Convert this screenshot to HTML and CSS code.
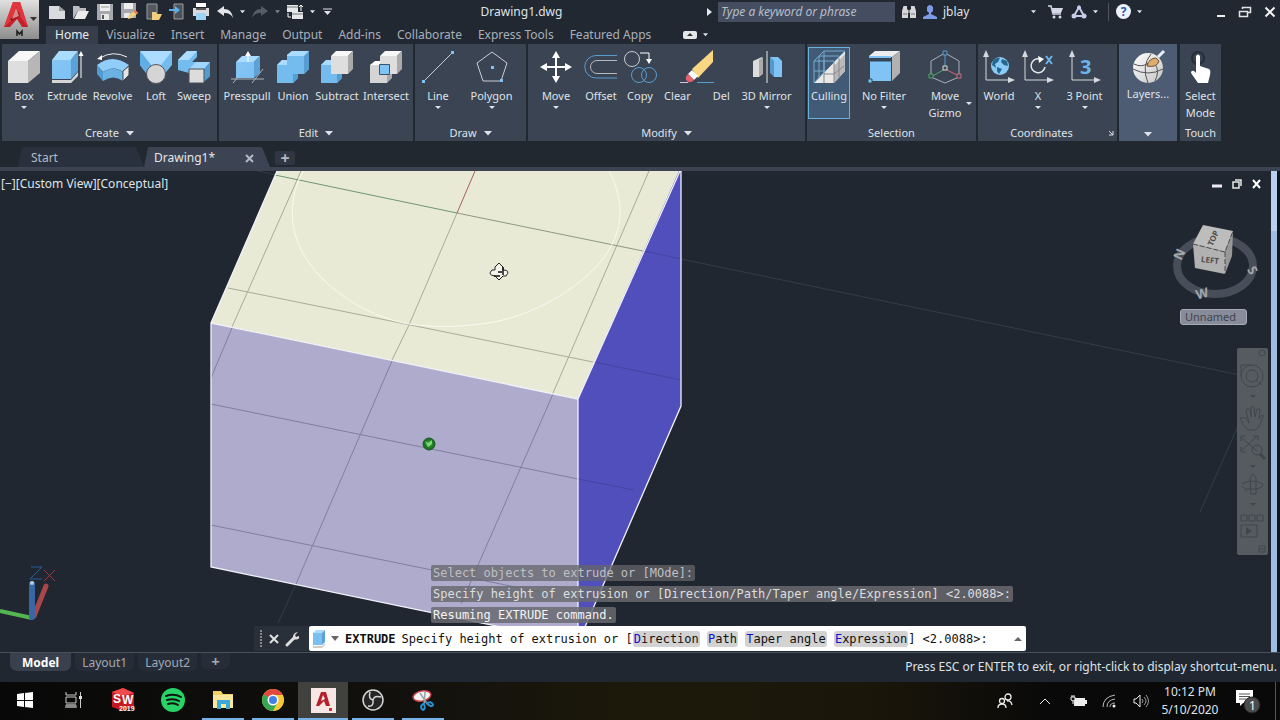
FILE: index.html
```html
<!DOCTYPE html>
<html lang="en">
<head>
<meta charset="utf-8">
<title>Drawing1.dwg</title>
<link rel="stylesheet" href="styles.css">
</head>
<body>
<svg class="defs" aria-hidden="true">
  <defs>
    <linearGradient id="gBlue" x1="0" y1="0" x2="1" y2="1"><stop offset="0" stop-color="#86c6f5"/><stop offset="1" stop-color="#7cc0f2"/></linearGradient>
    <linearGradient id="gApp" x1="0" y1="0" x2="0" y2="1"><stop offset="0" stop-color="#e0e0e0"/><stop offset="1" stop-color="#8d8d8d"/></linearGradient>
    <linearGradient id="gBall" x1="0" y1="0" x2="1" y2="1"><stop offset="0" stop-color="#ffffff"/><stop offset="1" stop-color="#c4c4c4"/></linearGradient>
    <radialGradient id="gGreen"><stop offset="0" stop-color="#3fae3a"/><stop offset="1" stop-color="#12641a"/></radialGradient>
    <symbol id="down" viewBox="0 0 6 4"><path d="M0 0h6L3 3.500z" fill="#dfe3e9"/></symbol>
    <symbol id="downBig" viewBox="0 0 8 5"><path d="M0 0h8L4 4.500z" fill="#dfe3e9"/></symbol>
    <symbol id="axes" viewBox="0 0 34 34"><path d="M4 4v26h27" fill="none" stroke="#d5d9df"/><path d="M4 0l3 7H1zM33 30l-7-3v6z" fill="#d5d9df"/></symbol>
  </defs>
</svg>
<div class="app">
  <header class="header">
    <button class="app-button" aria-label="Application menu">
      <svg width="39" height="39" viewBox="0 0 39 39"><rect width="39" height="39" fill="url(#gApp)"/><path d="M4 27L13 2h7l8 25h-6l-5-8-7 8z" fill="#c5202b"/><path d="M13 2h7l8 25-9-12-3-8-5 14-7 6z" fill="#e0373e"/><path d="M10 19l9-7 1 4-8 5z" fill="#9c1119"/><path d="M16 8l3 8-7 3z" fill="#d88a8a"/><path d="M17 36v-5l2.500 3 2.500-3v5" fill="none" stroke="#1c1c1c" stroke-width="1.500"/><path d="M30 17h7l-3.500 4z" fill="#333"/></svg>
    </button>
    <div class="titlebar">
      <div class="quick">
        <button aria-label="New"><svg width="18" height="16" viewBox="0 0 18 16"><path d="M1 2h10l6 5v8H1z" fill="#d9dbde"/><path d="M11 2v5h6" fill="#9a9da2"/></svg></button>
        <button aria-label="Open"><svg width="18" height="16" viewBox="0 0 18 16"><path d="M1 15V2h6l1 2h6v3H6z" fill="#b9bbbe"/><path d="M2 15L6 7h11l-4 8z" fill="#ececec"/></svg></button>
        <button aria-label="Save"><svg width="18" height="16" viewBox="0 0 18 16"><path d="M1 0h16v16H1z" fill="#a5a8ac"/><path d="M4 0h10v7H4z" fill="#eee"/><path d="M5 10h8v6H5z" fill="#e8e8e8"/><path d="M6 11h2v4H6z" fill="#555"/><path d="M5 3h8" stroke="#999"/></svg></button>
        <button aria-label="Save as"><svg width="18" height="17" viewBox="0 0 18 17"><path d="M1 0h15v15H1z" fill="#a5a8ac"/><path d="M4 0h9v6H4z" fill="#eee"/><path d="M4 10h6v5H4z" fill="#e8e8e8"/><path d="M8 16l1-4 6-5 3 3-6 5z" fill="#f1cf7b"/><path d="M15 7l3 3-2 1-3-3z" fill="#e8735f"/></svg></button>
        <button aria-label="Open from mobile"><svg width="18" height="16" viewBox="0 0 18 16"><path d="M3 0h10v15H3z" fill="#55595f" stroke="#9b9ea3"/><path d="M8 16V8h4l1 2h5l-3 6z" fill="#f4ce7d"/></svg></button>
        <button aria-label="Save to mobile"><svg width="18" height="16" viewBox="0 0 18 16"><path d="M6 0h9v15H6z" fill="#4d525a" stroke="#9b9ea3"/><path d="M1 5h6V2l5 4-5 4V7H1z" fill="#58b0ee"/></svg></button>
        <button aria-label="Plot"><svg width="18" height="17" viewBox="0 0 18 17"><path d="M4 0h10v4H4z" fill="#fff"/><path d="M1 5h16v8H1z" fill="#d8dadd"/><path d="M4 5h10v2H4z" fill="#555"/><path d="M4 10h10v7H4z" fill="#9cd3f7"/></svg></button>
        <button aria-label="Undo"><svg width="18" height="16" viewBox="0 0 18 16"><path d="M1 7l7-5v3c5 0 8 3 9 9-2-4-5-5-9-5v3z" fill="#e3e5e8"/></svg></button>
        <button aria-label="Undo list"><svg width="5" height="4"><use href="#down"/></svg></button>
        <button aria-label="Redo"><svg width="18" height="16" viewBox="0 0 18 16"><path d="M17 7l-7-5v3c-5 0-8 3-9 9 2-4 5-5 9-5v3z" fill="#555c66"/></svg></button>
        <button class="dim" aria-label="Redo list"><svg width="5" height="4"><use href="#down"/></svg></button>
        <button aria-label="Batch plot"><svg width="18" height="16" viewBox="0 0 18 16"><path d="M1 1h11v7H1zM6 8h11v7H6z" fill="#e6e8ea"/><path d="M1 3h11M6 10h11" stroke="#777"/><path d="M15 1v6m-2-4l2-2 2 2M2 9v4h3" stroke="#fff" fill="none"/></svg></button>
        <button aria-label="Batch list"><svg width="5" height="4"><use href="#down"/></svg></button>
        <button class="customize" aria-label="Customize"><svg width="9" height="8" viewBox="0 0 9 8"><path d="M0 1h9" stroke="#dfe3e9"/><path d="M1 3h7L4.500 7z" fill="#dfe3e9"/></svg></button>
      </div>
      <div class="doc-title">Drawing1.dwg</div>
      <div class="info">
        <svg width="5" height="8"><path d="M0 0l5 4-5 4z" fill="#e6e8ea"/></svg>
        <input class="search" type="text" aria-label="Search" placeholder="Type a keyword or phrase">
        <button aria-label="Find"><svg width="16" height="16" viewBox="0 0 16 16"><path d="M2.500 2h3.500v3l1 1v8H1V7zM10 2h3.500l1.500 5v7H9V6l1-1z" fill="#d8d8da"/><path d="M7 6h2v3H7z" fill="#888"/><path d="M2 10h4M10 10h4" stroke="#777"/></svg></button>
        <button class="user"><svg width="14" height="16" viewBox="0 0 14 16"><path d="M4 3q3-4 6 0v4L8 9v1l6 3v2H0v-2l6-3V9L4 7z" fill="#7d9be6"/></svg>jblay</button>
        <svg width="5" height="4"><use href="#down"/></svg>
        <button class="store" aria-label="Store"><svg width="15" height="14" viewBox="0 0 15 14"><path d="M0 1h3l2 8h8" fill="none" stroke="#d5d8ea" stroke-width="1.500"/><path d="M4 3h11l-2 5H5z" fill="#d5d8ea"/><circle cx="6" cy="12" r="1.500" fill="#d5d8ea"/><circle cx="12" cy="12" r="1.500" fill="#d5d8ea"/></svg></button>
        <button aria-label="App services"><svg width="16" height="14" viewBox="0 0 16 14"><path d="M8 2l5 9H3z" fill="none" stroke="#c9cde8" stroke-width="2"/><circle cx="8" cy="2.500" r="2" fill="#c9cde8"/><circle cx="3" cy="11" r="2.500" fill="#c9cde8"/><circle cx="13" cy="11" r="2.500" fill="#c9cde8"/></svg></button>
        <svg width="5" height="4"><use href="#down"/></svg>
        <span class="sep"></span>
        <button class="help" aria-label="Help">?</button>
        <svg width="5" height="4"><use href="#down"/></svg>
        <span class="window">
          <button aria-label="Minimize"><svg width="10" height="12"><path d="M1 10h8" stroke="#eee" stroke-width="2"/></svg></button>
          <button aria-label="Restore"><svg width="14" height="12" viewBox="0 0 14 12"><path d="M4.500 3V1.500h8v5H10M1.500 5.500h8v5h-8z" fill="none" stroke="#e4e4e4" stroke-width="1.500"/></svg></button>
          <button aria-label="Close"><svg width="12" height="12" viewBox="0 0 12 12"><path d="M1.500 1.500l9 9M10.500 1.500l-9 9" stroke="#f2f2f2" stroke-width="2"/></svg></button>
        </span>
      </div>
    </div>
    <nav class="menu">
      <button class="active">Home</button><button>Visualize</button><button>Insert</button><button>Manage</button><button>Output</button><button>Add-ins</button><button>Collaborate</button><button>Express Tools</button><button>Featured Apps</button>
      <button class="toggle" aria-label="Minimize ribbon"><svg width="14" height="8" viewBox="0 0 14 8"><rect width="14" height="8" rx="2" fill="#e4e6ea"/><path d="M4 5l3-3 3 3z" fill="#333"/></svg><svg width="5" height="4"><use href="#down"/></svg></button>
    </nav>
  </header>

  <section class="ribbon">
    <div class="panel create">
      <div class="tools">
        <button class="tool"><svg viewBox="0 0 34 34"><path d="M1 11h20v22H1z" fill="#dedede"/><path d="M1 11L12 1h21L21 11z" fill="#f7f7f7"/><path d="M21 11L33 1v22L21 33z" fill="#b9b7b5"/></svg>Box<i></i></button>
        <button class="tool"><svg viewBox="0 0 34 34"><path d="M2 10h19v19H2z" fill="url(#gBlue)"/><path d="M2 10L9 1h19l-7 9z" fill="#a9dcff"/><path d="M21 10l7-9v20l-7 8z" fill="#5da2d6"/><path d="M2 30h19l7-8v4l-7 7H2z" fill="#d6d6d6"/><path d="M31 28V5" stroke="#fff"/><path d="M31 1l2.500 5h-5z" fill="#fff"/></svg>Extrude</button>
        <button class="tool"><svg viewBox="0 0 34 34"><path d="M4 8Q17 0 31 7" fill="none" stroke="#eee"/><path d="M1 9l5-4v5z" fill="#fff"/><path d="M1 15q15-12 32 0l-6 7q-9-7-20 0z" fill="#90cdf8"/><path d="M1 15l6 7v9l-6-7z" fill="#529bd0"/><path d="M7 22q10-7 20 0v9q-10-7-20 0z" fill="#6bb2e4"/><path d="M27 21l6-5v9l-6 6z" fill="#e4e4e4" stroke="#444"/></svg>Revolve</button>
        <button class="tool"><svg viewBox="0 0 34 34"><path d="M1 1h32v14L23 27H10L1 15z" fill="#75bcee"/><path d="M1 1h32L22 15H12z" fill="#acdcff"/><path d="M1 1l11 14-4 9-7-9z" fill="#5faee6"/><circle cx="17" cy="24" r="9.500" fill="#d5d5d5" stroke="#555"/></svg>Loft</button>
        <button class="tool"><svg viewBox="0 0 34 34"><path d="M1 10L10 1h10v6l-5 5h18v14l-6 5V19H12v4l-11-3z" fill="#75bcee"/><path d="M1 10L10 1h10l-8 9z" fill="#acdcff"/><path d="M12 19l7-7h14l-6 7z" fill="#a1d7ff"/><path d="M27 19l6-7v14l-6 6z" fill="#549bcf"/><path d="M12 19h15v14H12z" fill="#dcdcdc" stroke="#4d5057"/></svg>Sweep</button>
      </div>
      <button class="panel-title">Create<svg width="8" height="5"><use href="#downBig"/></svg></button>
    </div>
    <div class="panel edit">
      <div class="tools">
        <button class="tool"><svg viewBox="0 0 34 34"><path d="M1 29h33M3 33l5-6M22 33l11-14" stroke="#aeb3ba"/><path d="M6 12h18v16H6z" fill="url(#gBlue)"/><path d="M6 12l6-6h18l-6 6z" fill="#a9dcff"/><path d="M24 12l6-6v17l-6 5z" fill="#5da2d6"/><path d="M18 12V4" stroke="#fff"/><path d="M18 1l3 5h-6z" fill="#fff"/></svg>Presspull</button>
        <button class="tool"><svg viewBox="0 0 34 34"><path d="M1 15l5-5h5V5l5-4h17v18l-5 5h-6v4l-5 5H1z" fill="#75bcee"/><path d="M11 5l5-4h17l-5 5H11zM1 15l5-5h5v5z" fill="#a9dcff"/><path d="M28 6l5-5v18l-5 5zM17 24h5v4l-5 5z" fill="#569dd1"/></svg>Union</button>
        <button class="tool"><svg viewBox="0 0 34 34"><path d="M1 15l5-5h6v14h10v4l-5 5H1z" fill="#75bcee"/><path d="M1 15l5-5h5v5z" fill="#a9dcff"/><path d="M17 24h5v4l-5 5z" fill="#569dd1"/><path d="M11 6h17v18H11z" fill="#dedede"/><path d="M11 6l5-5h17l-5 5z" fill="#f7f7f7"/><path d="M28 6l5-5v18l-5 5z" fill="#aaa"/></svg>Subtract</button>
        <button class="tool"><svg viewBox="0 0 34 34"><path d="M1 15h17v18H1z" fill="#d5d5d5"/><path d="M1 15l5-4h17l-5 4z" fill="#fff"/><path d="M18 24h5v4l-5 5z" fill="#aaa"/><path d="M11 6h17v18H11z" fill="#dedede"/><path d="M11 6l5-5h17l-5 5z" fill="#f7f7f7"/><path d="M28 6l5-5v18l-5 5z" fill="#aaa"/><path d="M10.500 14.500h10v10h-10z" fill="#7fc4f5" stroke="#3e5365"/></svg>Intersect</button>
      </div>
      <button class="panel-title">Edit<svg width="8" height="5"><use href="#downBig"/></svg></button>
    </div>
    <div class="panel draw">
      <div class="tools">
        <button class="tool"><svg viewBox="0 0 34 34"><path d="M3 31L31 3" stroke="#c9cdd3"/><path d="M1 30h3v3H1zM30 1h3v3h-3z" fill="#7fc4f5"/></svg>Line<i></i></button>
        <button class="tool"><svg viewBox="0 0 34 34"><path d="M17 2l15 11-6 18H8L2 13z" fill="none" stroke="#c9cdd3"/><path d="M16 16h3v3h-3zM25 29h3v3h-3z" fill="#7fc4f5"/></svg>Polygon<i></i></button>
      </div>
      <button class="panel-title">Draw<svg width="8" height="5"><use href="#downBig"/></svg></button>
    </div>
    <div class="panel modify">
      <div class="tools">
        <button class="tool"><svg viewBox="0 0 34 34"><path d="M17 6v22M6 17h22" stroke="#fff" stroke-width="2"/><path d="M17 1l4 7h-8zM17 33l4-7h-8zM1 17l7-4v8zM33 17l-7-4v8z" fill="#fff"/></svg>Move<i></i></button>
        <button class="tool"><svg viewBox="0 0 34 34"><path d="M33 5.500H12a11 11 0 0 0 0 22.500h21" fill="none" stroke="#5a9cd0"/><path d="M33 10.500H13a6 6 0 0 0 0 13h20" fill="none" stroke="#b4b9c1"/></svg>Offset</button>
        <button class="tool"><svg viewBox="0 0 34 34"><circle cx="9" cy="9" r="7.500" fill="none" stroke="#c9cdd3"/><path d="M17 3h9v6" fill="none" stroke="#fff"/><path d="M26 14l-3-5h6z" fill="#fff"/><circle cx="16" cy="25" r="7.500" fill="none" stroke="#5a9cd0"/><circle cx="26" cy="25" r="7.500" fill="none" stroke="#5a9cd0"/></svg>Copy</button>
        <button class="tool erase"><svg viewBox="0 0 34 34"><path d="M0 32.500h8" stroke="#c9cdd3"/><path d="M17 32.500h17" stroke="#5a9cd0"/><path d="M12 19L33 0v12L18 28z" fill="#f9d681"/><path d="M12 20l6 6-4 4-6-6z" fill="#fff"/><path d="M8 24l6 6q-4 4-7 1-3-3 1-7z" fill="#e9606d"/></svg><span><b>Clear</b><b>Del</b></span></button>
        <button class="tool"><svg viewBox="0 0 34 34"><path d="M3 11l9-4v16l-3 4H3z" fill="#dcdcdc"/><path d="M9 10l4-3v17l-4 3z" fill="#aaa"/><path d="M17 1v32" stroke="#e8e8e8"/><path d="M20 7l4 3v17l-4-4z" fill="#5598cc"/><path d="M20 7h8l4 4v16h-8V11z" fill="#7fc4f5"/></svg>3D Mirror<i></i></button>
      </div>
      <button class="panel-title">Modify<svg width="8" height="5"><use href="#downBig"/></svg></button>
    </div>
    <div class="panel selection">
      <div class="tools">
        <button class="tool pressed"><svg viewBox="0 0 34 34"><path d="M2 33L33 1v20L22 33z" fill="#e8e8e8"/><path d="M22 16L33 4v17L22 33z" fill="#b9b9b9"/><path d="M2 33V11L12 1h21L22 12M2 11h20M12 1v21L2 33M12 22h1M7 6h20M7 6v22M2 21h12M12 11v11M22 11v2" fill="none" stroke="#78abd0"/><path d="M22 13v20M12 23v10M12 24h10l10-8M27 8v19" fill="none" stroke="#898989"/></svg>Culling</button>
        <button class="tool"><svg viewBox="0 0 34 34"><path d="M3 10h21v21H3z" fill="#7fc4f5"/><path d="M2 6L8 1h25l-8 6z" fill="#ededed"/><path d="M25 7l8-6v22l-8 8z" fill="#b3b1af"/><path d="M2 7h22" stroke="#7fc4f5" stroke-width="2"/><path d="M3 10.500h21" stroke="#31465b" stroke-width="2"/><path d="M1 29h4v4H1z" fill="#7fc4f5" stroke="#31465b"/></svg>No Filter<i></i></button>
        <button class="tool gizmo"><svg viewBox="0 0 34 34"><path d="M17 3l14 8v16l-14 6-14-6V11z" fill="none" stroke="#a9afb8"/><path d="M17 5v13" stroke="#5a9cd0"/><path d="M17 19l14 7" stroke="#d4687a"/><path d="M17 19L3 27" stroke="#4ea86b"/><path d="M15 1h4v4h-4z" fill="#3b4453" stroke="#5a9cd0"/><path d="M15 16h4v4h-4z" fill="#3b4453" stroke="#ddd"/><path d="M1 24h4v4H1z" fill="#3b4453" stroke="#4ea86b"/><path d="M29 24h4v4h-4z" fill="#3b4453" stroke="#d4687a"/></svg>Move<br>Gizmo<i></i></button>
      </div>
      <div class="panel-title">Selection</div>
    </div>
    <div class="panel coordinates">
      <div class="tools">
        <button class="tool"><svg viewBox="0 0 34 34"><use href="#axes"/><circle cx="18" cy="16" r="9" fill="#8bcbf6"/><path d="M11 10q5-3 7-2l-2 4-3 2 1 4-4-3zM20 9l5 2 1 5-4-1-3-3zM15 17l5 2-3 5-2-3z" fill="#24678f"/></svg>World</button>
        <button class="tool"><svg viewBox="0 0 34 34"><use href="#axes"/><path d="M19 9a7 7 0 1 0 5 8" fill="none" stroke="#e4e6ea" stroke-width="1.500"/><path d="M17 6l6 3-5 4z" fill="#fff"/><path d="M25 6l6 8M31 6l-6 8" stroke="#6fb5ec" stroke-width="2"/></svg>X<i></i></button>
        <button class="tool"><svg viewBox="0 0 34 34"><use href="#axes"/><text x="12" y="24" class="three">3</text></svg>3 Point<i></i></button>
      </div>
      <button class="panel-title">Coordinates<svg class="corner" width="6" height="6"><path d="M1 1l4 4M5 1v4H1" fill="none" stroke="#dfe3e9"/></svg></button>
    </div>
    <div class="panel layers">
      <button class="tool"><svg viewBox="0 0 34 34"><circle cx="17" cy="18" r="15" fill="url(#gBall)"/><path d="M2 19q15 8 30 0M3 14q8 4 14-1M17 33Q10 16 20 4M24 31q5-10 0-17" fill="none" stroke="#555"/><path d="M16 16q2-8 9-8l3 3q-2 7-12 5z" fill="#e0ac6b" stroke="#695137"/><path d="M27 7l6-6" stroke="#e5f1fb" stroke-width="3"/></svg>Layers...</button>
      <svg width="8" height="5"><use href="#downBig"/></svg>
    </div>
    <div class="panel touch">
      <button class="tool"><svg viewBox="0 0 34 34"><circle cx="14" cy="8" r="6" fill="none" stroke="#252c36" stroke-width="2"/><path d="M12 6q2-3 4 0v10l9 3q2 1 1 6l-2 8H14L7 23q0-3 3-2l2 2z" fill="#fff"/></svg>Select<br>Mode</button>
      <div class="panel-title">Touch</div>
    </div>
  </section>

  <nav class="doc-tabs">
    <button class="doc-tab">Start</button>
    <button class="doc-tab current">Drawing1*<svg width="9" height="9"><path d="M1 1l7 7M8 1L1 8" stroke="#b3bac4" stroke-width="2"/></svg></button>
    <button class="add" aria-label="New drawing">+</button>
  </nav>

  <main class="viewport">
    <svg class="scene" viewBox="0 171 1280 481" preserveAspectRatio="xMinYMin slice">
      <path d="M681 259L1240 375M1238 426L1200 512M296 584L278 623M257 171L277 175" stroke="#343d45" fill="none"/>
      <path d="M277 171H681L578 399 211 323z" fill="#e8ead6"/>
      <path d="M211 323L578 399V643L211 567z" fill="#aeabcd"/>
      <path d="M681 171V406L578 643V399L679 171z" fill="#504fbc"/>
      <path d="M409 325L392 360M301 171L232 327M228 288L593 362M649 171L553 393M457 213L409 325" stroke="#aaab97" fill="none"/>
      <path d="M457 213L643 251" stroke="#8c9881"/><path d="M275 175L457 213" stroke="#6f9573"/><path d="M475 171L457 213" stroke="#a26258"/>
      <path d="M392 361L296 584M232 328L211 378M211 404L578 479M211 525L540 592M553 394L461 604" stroke="#817f9e" fill="none"/>
      <path d="M644 251L681 259M594 362L681 380M578 479L634 490" stroke="#4643a0" fill="none"/>
      <path d="M303 171C289 197 288 228 304 255C321 285 363 316 409 324C434 328 466 327 494 322C537 314 586 285 607 253C622 230 626 203 609 171" fill="none" stroke="#fafaf2"/>
      <path d="M277 171L211 323V567L578 643V399L211 323M578 399L680 171M681 171V406L578 643" fill="none" stroke="#f2f2fa" stroke-width="1.300"/>
      <circle cx="429" cy="444" r="6" fill="url(#gGreen)" stroke="#24562b"/><path d="M425 441l3 2 4-3v4l-4 3z" fill="#81d878"/>
      <path d="M499 263l4 4v3q8 0 3 6h-3l-4 4-4-4q-8-1-3-6h3v-3z" fill="#f4f4ea" stroke="#222"/><path d="M494 276h6M498 272h4M503 267v8" stroke="#111" stroke-width="1.500"/>
      <path d="M0 611L32 618" stroke="#54b651" stroke-width="4"/><path d="M34 616L46 586" stroke="#a94649" stroke-width="5" stroke-linecap="round"/><path d="M32 617V584" stroke="#3b66a4" stroke-width="6" stroke-linecap="round"/><circle cx="32" cy="583" r="2" fill="#b7cbe7"/>
      <path d="M31 567h11L30 579h12" fill="none" stroke="#285a9c"/><path d="M44 570l11 11M55 570l-11 11" stroke="#98393f"/>
    </svg>
    <div class="view-label">[−][Custom View][Conceptual]</div>
    <div class="view-window">
      <button aria-label="Minimize view"><svg width="10" height="10"><path d="M0 7h10" stroke="#eceaf5" stroke-width="3"/></svg></button>
      <button aria-label="Restore view"><svg width="10" height="10"><path d="M3 1h6v6M1 3h6v6H1z" fill="none" stroke="#e6ece6" stroke-width="1.500"/></svg></button>
      <button aria-label="Close view"><svg width="10" height="10"><path d="M1 1l7 8M8 1L1 9" stroke="#fff" stroke-width="2"/></svg></button>
    </div>
    <div class="cube">
      <svg width="90" height="84" viewBox="0 0 90 84">
        <ellipse cx="45" cy="45" rx="38" ry="28" fill="none" stroke="#474e59" stroke-width="8"/>
        <path d="M33 4L63 10 55 31 23 23z" fill="#bdbdbd"/><path d="M23 23L55 31V53L25 47z" fill="#b1b1b1"/><path d="M55 31L63 10 62 35 55 53z" fill="#989898"/>
        <path d="M23 23L55 31 63 10M55 31V53" fill="none" stroke="#4c4c4c" stroke-dasharray="5 2"/>
        <text x="40" y="42" transform="rotate(6 40 39)">LEFT</text><text x="43" y="20" transform="rotate(-65 43 17)">TOP</text>
        <g class="compass"><text x="9" y="38" transform="rotate(-65 9 33)">N</text><text x="83" y="54" transform="rotate(60 83 49)">S</text><text x="32" y="77" transform="rotate(-15 32 72)">W</text></g>
      </svg>
    </div>
    <button class="ucs">Unnamed<svg width="8" height="6"><path d="M1 1h6L4 5z" fill="none" stroke="#8c8f9a"/></svg></button>
    <div class="navbar">
      <svg viewBox="0 0 31 207"><g fill="none" stroke="#40464c"><circle cx="25" cy="5" r="3"/><circle cx="15" cy="28" r="11"/><circle cx="15" cy="28" r="6"/><path d="M4 28V17h11M19 32l6 5M6 70q3-2 6 5l-3-13q2-3 4 0l1 7 0-10q2-2 3 0l1 10 2-8q3-1 3 1l-1 9 3-4q3 0 0 4-3 10-7 11h-7q-4-3-8-12zM4 89l16 14M20 88L4 103M4 93v-5h5M16 88h5v4M4 99v5h5"/><circle cx="20" cy="102" r="5"/><path d="M23 106l5 5" stroke-width="3"/><path d="M13 130l3-4 3 4v16h-5zM5 136q10-6 21 0 0 6-17 5M5 138l5 5"/><path d="M4 167h6v6H4zM12 167h6v6h-6zM20 167h6v6h-6zM4 177h16v12H4zM22 198h6v6h-6zM22 201h6"/></g><path d="M13 47h6l-3 3zM13 117h6l-3 3zM13 155h6l-3 3zM9 179v8l6-4z" fill="#40464c"/></svg>
    </div>
    <div class="edge"></div>
    <div class="console">
      <div class="history"><p class="old">Select objects to extrude or [MOde]:</p><p>Specify height of extrusion or [Direction/Path/Taper angle/Expression] &lt;2.0088&gt;:</p><p class="latest">Resuming EXTRUDE command.</p></div>
      <div class="command">
        <div class="grip">
          <svg width="3" height="18"><path d="M1 0v18" stroke="#dedede" stroke-dasharray="2 1"/></svg>
          <button aria-label="Close command line"><svg width="10" height="10"><path d="M1 1l8 8M9 1L1 9" stroke="#e0e0e0" stroke-width="2"/></svg></button>
          <button aria-label="Customize command line"><svg width="16" height="16" viewBox="0 0 16 16"><path d="M2 14L9 7" stroke="#dedede" stroke-width="3" stroke-linecap="round"/><path d="M8 8q-1-6 5-7l-3 3 1 2 3-1q1 5-6 3z" fill="#dedede"/></svg></button>
        </div>
        <div class="prompt">
          <svg width="14" height="18" viewBox="0 0 14 18"><path d="M0 3h9v12H0z" fill="#79bff0"/><path d="M0 3l3-3h9L9 3z" fill="#a9dcff"/><path d="M9 3l3-3v12l-3 3z" fill="#5da2d6"/><path d="M0 16h9l3-3v2l-3 3H0z" fill="#ccc"/></svg>
          <svg class="prompt-arrow" width="8" height="5"><path d="M0 0h8L4 5z" fill="#666"/></svg>
          <b>EXTRUDE</b>
          <span>Specify height of extrusion or [<button><em>D</em>irection</button> <button><em>P</em>ath</button> <button><em>T</em>aper angle</button> <button><em>E</em>xpression</button>] &lt;2.0088&gt;:</span>
          <svg class="up" width="8" height="4"><path d="M0 4h8L4 0z" fill="#666"/></svg>
        </div>
      </div>
    </div>
  </main>

  <footer class="status">
    <nav class="layouts"><button class="on">Model</button><button>Layout1</button><button>Layout2</button><button class="plus" aria-label="New layout">+</button></nav>
    <div>Press ESC or ENTER to exit, or right-click to display shortcut-menu.</div>
  </footer>

  <div class="taskbar">
    <button aria-label="Start"><svg width="16" height="16"><path d="M0 2l7-1v7H0zM8 1l8-1v8H8zM0 9h7v6l-7-1zM8 9h8v7l-8-1z" fill="#fff"/></svg></button>
    <button aria-label="Task view"><svg width="18" height="18"><path d="M1 1v3h10V1M1 17v-3h10v3M1 6h10v6H1zM15.500 1v16" fill="none" stroke="#ccc"/><path d="M1 13h10v4H1z" fill="#888"/><path d="M14 5h3v3h-3z" fill="#ddd"/></svg></button>
    <button aria-label="SolidWorks"><svg width="24" height="24" viewBox="0 0 24 24"><path d="M1 4L12 0l11 5v14l-11 4-11-4z" fill="#c41922"/><path d="M1 4L12 0l11 5-11 3z" fill="#f04a4d"/><text x="2" y="15" class="sw">S</text><text x="11" y="16" class="sw">W</text><text x="8" y="23" class="year">2019</text></svg></button>
    <button aria-label="Spotify"><svg width="24" height="24"><circle cx="12" cy="12" r="12" fill="#27d366"/><path d="M5 8q8-3 15 1M6 12q7-2 12 1M7 16q6-2 10 1" fill="none" stroke="#101510" stroke-width="2" stroke-linecap="round"/></svg></button>
    <button class="open" aria-label="File Explorer"><svg width="22" height="20"><path d="M1 1h8l2 3h10v14H1z" fill="#f3cf68"/><path d="M1 5h20v13H1z" fill="#fbe69d"/><path d="M5 19V10h13v9h-4v-5H9v5z" fill="#3ba9dc"/></svg></button>
    <button class="open" aria-label="Chrome"><svg width="22" height="22" viewBox="0 0 22 22"><circle cx="11" cy="11" r="11" fill="#f6c934"/><path d="M11 11L1.500 5.500A11 11 0 0 1 20.500 5.500z" fill="#df4a3c"/><path d="M11 11L1.500 5.500A11 11 0 0 0 11 22l5-9z" fill="#35a653"/><path d="M11 6h9.500A11 11 0 0 1 11 22l5-9z" fill="#f6c934"/><circle cx="11" cy="11" r="5.500" fill="#fff"/><circle cx="11" cy="11" r="4" fill="#447fe6"/></svg></button>
    <button class="open focus" aria-label="AutoCAD"><svg width="25" height="25"><path d="M0 0h25v25H0z" fill="#f7e7e4"/><path d="M5 18L10 4h5l4 14h-4l-2-5-5 5z" fill="#b31f2a"/><path d="M10 13l4-2-2-4z" fill="#f7e7e4"/><path d="M18 20h3v3h-3z" fill="#d12b36"/></svg></button>
    <button class="open" aria-label="OBS"><svg width="22" height="22" viewBox="0 0 22 22"><circle cx="11" cy="11" r="10" fill="#252525" stroke="#d5d5d5" stroke-width="1.500"/><path d="M8 3q-2 7 3 8M19 8q-7-2-8 3M6 17q6 1 5-6" fill="none" stroke="#d5d5d5" stroke-width="1.500"/></svg></button>
    <button class="open" aria-label="Snipping Tool"><svg width="22" height="22" viewBox="0 0 22 22"><ellipse cx="10" cy="7" rx="9" ry="5" fill="#f3f3f3" stroke="#c9424b" stroke-width="1.500" transform="rotate(-12 10 7)"/><path d="M8 4l8 12M13 3l-1 13" stroke="#98a1a8" stroke-width="1.500"/><path d="M11 15q-4 3 0 6 3-1 1-6zM15 14q5-2 6 2-2 3-6-2z" fill="none" stroke="#2990ce" stroke-width="2"/></svg></button>
    <div class="tray">
      <button aria-label="People"><svg width="16" height="16" viewBox="0 0 16 16"><g fill="none" stroke="#eee" stroke-width="1.300"><circle cx="11" cy="4" r="3"/><circle cx="5" cy="8" r="2.500"/><path d="M1 15q0-4 4-4t4 4M10 8q4-1 5 4"/></g></svg></button>
      <button aria-label="Hidden icons"><svg width="12" height="8"><path d="M1 7l5-5 5 5" fill="none" stroke="#eee"/></svg></button>
      <button aria-label="Battery"><svg width="17" height="13" viewBox="0 0 17 13"><path d="M4 3h11v8H4z" fill="#eee"/><path d="M15 5h2v4h-2z" fill="#eee"/><path d="M1 2h4v3q-2 2-4 0zM3 6v3M2 0v2M4 0v2" stroke="#eee" fill="#111"/></svg></button>
      <button aria-label="Network"><svg width="14" height="14"><path d="M1 13Q1 3 13 1M5 13q0-7 8-8M8 13q0-4 5-4" fill="none" stroke="#bbb"/><circle cx="12" cy="12" r="1.500" fill="#eee"/></svg></button>
      <button aria-label="Volume"><svg width="16" height="14"><path d="M1 5h2l4-4v12L3 9H1z" fill="none" stroke="#eee"/><path d="M9 5q2 2 0 4M11 3q4 4 0 8M13 1q5 6 0 12" fill="none" stroke="#999"/></svg></button>
      <div class="clock"><span>10:12 PM</span><span>5/10/2020</span></div>
      <button aria-label="Notifications"><svg width="26" height="26" viewBox="0 0 26 26"><path d="M1 2h17v13H8l-3 3v-3H1z" fill="#fff"/><path d="M4 6h11M4 8.500h11M4 11h7" stroke="#555"/><circle cx="17" cy="17" r="8" fill="#4b4b4b" stroke="#222"/><text x="14" y="22" class="badge">1</text></svg></button>
      <span class="peek"></span>
    </div>
  </div>
</div>
</body>
</html>
```

FILE: styles.css
```css
* { box-sizing: border-box; }
body { margin: 0; background: #212830; color: #dfe3e8; font: 12px/16px "Noto Sans", "Open Sans", sans-serif; }
button { margin: 0; padding: 0; border: 0; background: none; color: inherit; font: inherit; white-space: nowrap; }
svg { display: block; flex: none; overflow: visible; }
p { margin: 0; }
.defs { position: absolute; width: 0; height: 0; }
.app { display: flex; flex-direction: column; height: 100vh; min-height: 480px; overflow: hidden; }

.header { display: grid; grid-template-columns: 39px 1fr; grid-template-rows: 23px 21px; background: #212832; }
.app-button { grid-row: 1 / 3; align-self: start; }
.titlebar { display: flex; align-items: center; }
.quick { display: flex; align-items: center; gap: 6px; padding-left: 9px; }
.quick .dim { opacity: 0.5; }
.quick .customize { padding: 0 4px 0 2px; }
.doc-title { flex: 1; text-align: center; }
.info { display: grid; grid-template-columns: 5px 177px 16px 102px 5px 23px 16px 5px 6px 15px 5px 1fr; column-gap: 6px; align-items: center; width: 573px; }
.search { width: 100%; height: 20px; padding: 0 3px; border: 0; background: #454d60; color: #e1e3e8; font: italic 12px/16px "Noto Sans", sans-serif; }
.search::placeholder { color: #b7bdc8; opacity: 1; }
.user { display: flex; align-items: center; gap: 6px; }
.store { display: flex; justify-content: center; padding-left: 4px; }
.sep { height: 18px; margin-left: 4px; border-left: 1px solid #4d5661; }
.help { width: 15px; height: 15px; border-radius: 50%; background: #eef2fa; color: #2b59a8; font-weight: 700; line-height: 15px; }
.window { display: flex; justify-content: flex-end; align-items: center; gap: 12px; padding-right: 4px; }
.menu { display: flex; align-items: flex-end; padding-left: 7px; color: #a9b0ba; }
.menu button { height: 18px; padding: 0 8px; line-height: 18px; }
.menu .active { padding: 0 9px; background: #363e4b; color: #e8ebef; }
.menu .toggle { display: flex; align-items: center; gap: 6px; padding-left: 24px; }

.ribbon { display: flex; gap: 2px; height: 97px; padding-left: 2px; flex: none; font-size: 11px; }
.panel { display: flex; flex-direction: column; background: #3b4453; }
.tools { display: grid; flex: 1; padding-right: 4px; }
.create .tools { grid-template-columns: 44px 42px 49px 38px 38px; }
.edit .tools { grid-template-columns: 56px 36px 52px 46px; }
.draw .tools { grid-template-columns: 46px 61px; }
.modify .tools { grid-template-columns: 56px 34px 44px 70px 69px; }
.selection .tools { grid-template-columns: 43px 68px 54px; }
.coordinates .tools { grid-template-columns: 42px 36px 57px; }
.tool { display: flex; flex-direction: column; align-items: center; padding-top: 6px; line-height: 17px; }
.tool > svg { width: 34px; height: 34px; margin-bottom: 3px; }
.tool i { margin-top: 2px; border: 3px solid transparent; border-top-color: #dfe3e8; border-bottom: 0; }
.tool span { display: flex; gap: 22px; }
.tool b { font-weight: 400; }
.tool.pressed { align-self: start; height: 72px; margin: 3px 0 0 1px; padding-top: 2px; border: 1px solid #6ab0dc; background: #415a75; }
.gizmo { position: relative; }
.gizmo i { position: absolute; right: 0; top: 56px; }
.panel-title { display: flex; align-items: center; justify-content: center; gap: 7px; height: 16px; text-align: center; position: relative; }
.coordinates .panel-title { padding-right: 12px; }
.corner { position: absolute; right: 3px; }
.layers { align-items: center; justify-content: space-between; width: 58px; margin-right: 1px; padding-bottom: 4px; background: #4d5b73; }
.layers .tool > svg { margin-bottom: 1px; }
.touch { width: 41px; justify-content: space-between; }
.three { font: 700 20px "Noto Sans", sans-serif; fill: #6ab4ed; }

.doc-tabs { display: flex; align-items: flex-end; flex: none; height: 30px; padding-left: 18px; border-bottom: 4px solid #3c4352; }
.doc-tab { display: flex; align-items: center; justify-content: space-between; width: 126px; height: 20px; padding: 2px 16px 0 13px; border-radius: 6px 10px 0 0; background: #2a313e; color: #b3bac3; clip-path: polygon(4px 0, calc(100% - 8px) 0, 100% 100%, 0 100%); }
.doc-tab.current { padding-left: 10px; background: #3c4352; color: #e4e7eb; }
.add { width: 20px; height: 14px; margin: 0 0 2px 5px; border-radius: 2px; background: #303743; color: #b3bac4; font-size: 16px; font-weight: 700; line-height: 12px; }

.viewport { position: relative; flex: 1; min-height: 0; overflow: hidden; background: #202730; }
.scene { position: absolute; left: 0; top: 0; width: 100%; height: 100%; }
.view-label { position: absolute; left: 1px; top: 5px; }
.view-window { position: absolute; right: 18px; top: 8px; display: flex; gap: 10px; }
.cube { position: absolute; right: 20px; top: 50px; }
.cube text { font: 700 8px "Noto Sans", sans-serif; text-anchor: middle; fill: #4d4d4d; }
.cube .compass text { font-size: 13px; fill: #a4a7ac; }
.ucs { position: absolute; right: 33px; top: 138px; display: flex; align-items: center; justify-content: space-between; width: 67px; height: 16px; padding: 0 4px; border: 1px solid #a7aab8; border-radius: 3px; background: #888c9a; color: #41444d; font-size: 11px; line-height: 14px; }
.navbar { position: absolute; right: 12px; top: 177px; width: 31px; border-radius: 2px; background: #565b60; }
.edge { position: absolute; right: 0; top: 0; bottom: 0; width: 9px; border-right: 3px solid #11161b; background: linear-gradient(#b7cff0 60px, #9fbde2 60px); }
.console { position: absolute; left: 254px; bottom: 1px; font-family: "DejaVu Sans Mono", monospace; }
.history { display: flex; flex-direction: column; align-items: flex-start; gap: 5px; padding: 0 0 3px 177px; }
.history p { padding: 0 2px; border-radius: 2px; background: rgba(105, 106, 110, 0.85); color: #dedede; white-space: nowrap; }
.history .old { background: rgba(100, 101, 106, 0.75); color: #bfbfc2; }
.history .latest { color: #f3f3f3; }
.command { display: flex; height: 25px; }
.grip { display: flex; align-items: center; gap: 6px; width: 55px; padding-left: 6px; background: #293039; }
.prompt { display: flex; align-items: center; width: 717px; padding: 0 4px; border-radius: 2px; background: #fff; color: #111; white-space: nowrap; }
.prompt-arrow { margin: 0 6px 0 4px; }
.prompt b { margin-right: 6px; }
.prompt button { padding: 0 1px; border-radius: 3px; background: #d2d2d2; }
.prompt em { color: #1010d0; font-style: normal; }
.up { margin-left: auto; }

.status { display: flex; justify-content: space-between; flex: none; height: 30px; padding: 0 3px 0 10px; border-top: 1px solid #48515a; background: #202731; }
.status > div { padding-top: 6px; white-space: nowrap; }
.layouts { display: flex; gap: 4px; color: #a2a9b3; }
.layouts button { height: 18px; padding: 2px 7px 0; border-radius: 0 0 7px 7px; background: #262d38; }
.layouts .on { padding: 2px 12px 0; background: #3a414e; color: #fff; font-weight: 700; }
.layouts .plus { height: 16px; padding: 0 10px; font-size: 15px; font-weight: 700; }

.taskbar { display: flex; flex: none; height: 38px; background: linear-gradient(90deg, #080808, #12110d 33%, #1d190a 50%, #1a160a 68%, #090909 82%); }
.taskbar > button { display: flex; align-items: center; justify-content: center; width: 50px; margin: 0; border-bottom: 2px solid transparent; }
.taskbar > button:first-child, .taskbar > button:nth-child(2) { width: 49px; }
.taskbar > .open { width: 42px; margin: 0 4px; border-bottom-color: #76b3e8; }
.taskbar > .focus { width: 50px; margin: 0; background: #41413d; }
.sw { font: 700 12px "Liberation Sans", sans-serif; fill: #fff; }
.year { font: 700 7px "Liberation Sans", sans-serif; fill: #fff; }
.tray { display: grid; grid-template-columns: 40px 40px 26px 36px 28px 70px 46px 8px; align-items: center; margin-left: auto; padding-right: 1px; }
.tray button { display: flex; justify-content: center; }
.clock { display: flex; flex-direction: column; align-items: center; line-height: 18px; }
.badge { font: 12px "Noto Sans", sans-serif; fill: #fff; }
.peek { height: 38px; margin-left: 4px; border-left: 1px solid #555; }
```
